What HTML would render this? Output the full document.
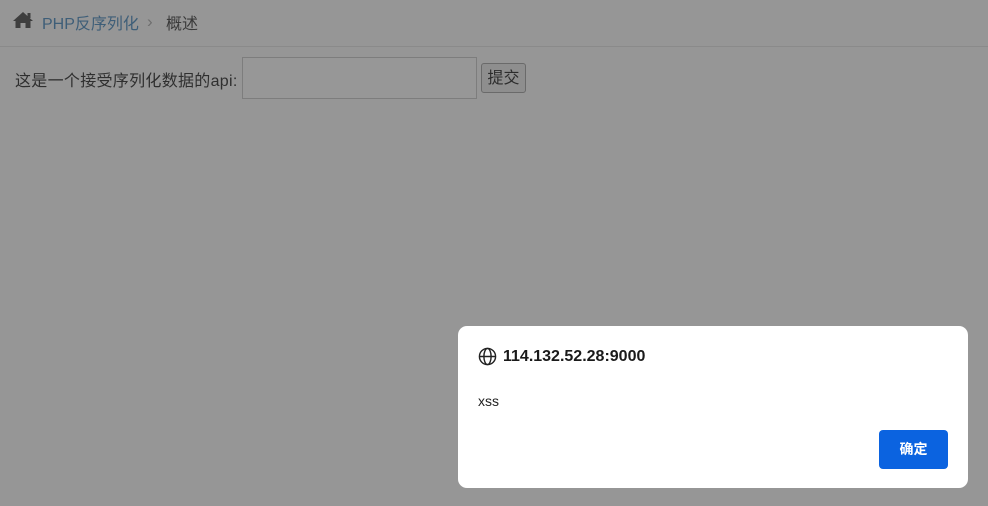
<!DOCTYPE html>
<html><head><meta charset="utf-8"><style>
body{margin:0;width:988px;height:506px;background:#969696;font-family:"Liberation Sans","Noto Sans CJK SC",sans-serif;position:relative;overflow:hidden;}
.hdr{position:absolute;left:0;top:0;width:988px;height:46px;border-bottom:1px solid #8a8a8a;}
.home{position:absolute;left:12px;top:11px;}
.crumb{position:absolute;left:42px;top:10px;font-size:16px;color:#3e5e78;}
.sep{position:absolute;left:147px;top:12px;font-size:17px;color:#6e6e6e;}
.cur{position:absolute;left:166px;top:10px;font-size:16px;color:#3a3a3a;}
.lbl{position:absolute;left:15px;top:67px;font-size:16px;color:#2f2f2f;letter-spacing:0.3px;}
.inp{position:absolute;left:242px;top:57px;width:233px;height:40px;border:1px solid #7d7d7d;background:#979797;}
.btn{position:absolute;left:481px;top:63px;width:45px;height:30px;border:1px solid #6a6a6a;border-radius:3px;background:#8e8e8e;font-size:16px;color:#2c2c2c;text-align:center;line-height:29px;box-sizing:border-box;}
.dlg{position:absolute;left:458px;top:326px;width:510px;height:162px;background:#fff;border-radius:9px;}
.t{position:absolute;left:45px;top:22px;font-size:16px;font-weight:bold;color:#1a1a1a;}
.g{position:absolute;left:20px;top:21px;}
.m{position:absolute;left:20px;top:67px;font-size:14px;color:#222;}
.ok{position:absolute;left:421px;top:104px;width:69px;height:39px;background:#0b63e0;border-radius:4px;color:#fff;font-weight:bold;font-size:14px;text-align:center;line-height:39px;}
</style></head><body>
<div class="hdr">
<svg class="home" width="22" height="18" viewBox="0 0 22 18"><path d="M11 1 L1 10 L3.5 10 L3.5 17 L8.5 17 L8.5 12 L13.5 12 L13.5 17 L18.5 17 L18.5 10 L21 10 Z" fill="#3e3e3e"/><rect x="15.5" y="2" width="3" height="5" fill="#3e3e3e"/></svg>
<div class="crumb">PHP反序列化</div><div class="sep">›</div><div class="cur">概述</div>
</div>
<div class="lbl">这是一个接受序列化数据的api:</div>
<div class="inp"></div>
<div class="btn">提交</div>
<div class="dlg">
<svg class="g" width="19" height="19" viewBox="0 0 20 20" fill="none" stroke="#222" stroke-width="1.5"><circle cx="10" cy="10" r="8.5"/><ellipse cx="10" cy="10" rx="3.8" ry="8.5"/><line x1="1.5" y1="10" x2="18.5" y2="10"/></svg>
<div class="t">114.132.52.28:9000</div>
<div class="m">xss</div>
<div class="ok">确定</div>
</div>
</body></html>
